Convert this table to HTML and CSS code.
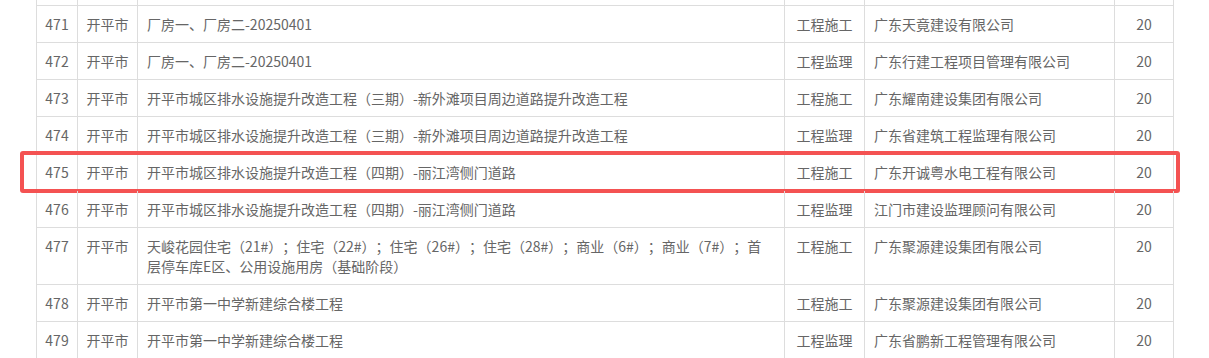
FILE: index.html
```html
<!DOCTYPE html>
<html lang="zh-CN">
<head>
<meta charset="utf-8">
<title>名单</title>
<link rel="stylesheet" href="styles.css">
</head>
<body>
<div class="table">
  <div class="row stub"><div class="cell"></div><div class="cell"></div><div class="cell"></div><div class="cell"></div><div class="cell"></div><div class="cell"></div></div>
  <div class="row"><div class="cell c">471</div><div class="cell c">开平市</div><div class="cell">厂房一、厂房二-20250401</div><div class="cell c">工程施工</div><div class="cell">广东天竟建设有限公司</div><div class="cell c">20</div></div>
  <div class="row"><div class="cell c">472</div><div class="cell c">开平市</div><div class="cell">厂房一、厂房二-20250401</div><div class="cell c">工程监理</div><div class="cell">广东行建工程项目管理有限公司</div><div class="cell c">20</div></div>
  <div class="row"><div class="cell c">473</div><div class="cell c">开平市</div><div class="cell">开平市城区排水设施提升改造工程（三期）-新外滩项目周边道路提升改造工程</div><div class="cell c">工程施工</div><div class="cell">广东耀南建设集团有限公司</div><div class="cell c">20</div></div>
  <div class="row"><div class="cell c">474</div><div class="cell c">开平市</div><div class="cell">开平市城区排水设施提升改造工程（三期）-新外滩项目周边道路提升改造工程</div><div class="cell c">工程监理</div><div class="cell">广东省建筑工程监理有限公司</div><div class="cell c">20</div></div>
  <div class="row highlight"><div class="cell c">475</div><div class="cell c">开平市</div><div class="cell">开平市城区排水设施提升改造工程（四期）-丽江湾侧门道路</div><div class="cell c">工程施工</div><div class="cell">广东开诚粤水电工程有限公司</div><div class="cell c">20</div></div>
  <div class="row"><div class="cell c">476</div><div class="cell c">开平市</div><div class="cell">开平市城区排水设施提升改造工程（四期）-丽江湾侧门道路</div><div class="cell c">工程监理</div><div class="cell">江门市建设监理顾问有限公司</div><div class="cell c">20</div></div>
  <div class="row"><div class="cell c">477</div><div class="cell c">开平市</div><div class="cell"><span class="line">天峻花园住宅（21#）；住宅（22#）；住宅（26#）；住宅（28#）；商业（6#）；商业（7#）；首</span><br>层停车库E区、公用设施用房（基础阶段）</div><div class="cell c">工程施工</div><div class="cell">广东聚源建设集团有限公司</div><div class="cell c">20</div></div>
  <div class="row"><div class="cell c">478</div><div class="cell c">开平市</div><div class="cell">开平市第一中学新建综合楼工程</div><div class="cell c">工程施工</div><div class="cell">广东聚源建设集团有限公司</div><div class="cell c">20</div></div>
  <div class="row"><div class="cell c">479</div><div class="cell c">开平市</div><div class="cell">开平市第一中学新建综合楼工程</div><div class="cell c">工程监理</div><div class="cell">广东省鹏新工程管理有限公司</div><div class="cell c">20</div></div>
</div>
</body>
</html>
```

FILE: styles.css
```css
html, body {
  margin: 0;
  padding: 0;
  background: #ffffff;
}
body {
  overflow: hidden;
  font-family: "Microsoft YaHei", "Noto Sans CJK SC", "Noto Sans", sans-serif;
  font-size: 14px;
  line-height: 20px;
  color: #666666;
  text-spacing-trim: space-all;
}
.table {
  margin: 0 0 0 36px;
  width: 1137px;
  border-left: 1px solid #dddddd;
}
.row {
  display: grid;
  grid-template-columns: 41px 60px 647px 80px 250px 59px;
  position: relative;
}
.cell {
  padding: 8px 9px;
  border-right: 1px solid #dddddd;
  border-bottom: 1px solid #dddddd;
  overflow: hidden;
}
.cell.c {
  text-align: center;
  padding-left: 2px;
  padding-right: 2px;
}
.stub .cell {
  height: 5px;
  padding: 0;
}
.line {
  white-space: nowrap;
}
.highlight::after {
  content: "";
  position: absolute;
  left: -17px;
  right: -6px;
  top: -3px;
  height: 42px;
  box-sizing: border-box;
  border: 4px solid #f45252;
  border-radius: 3px;
  pointer-events: none;
}
```
